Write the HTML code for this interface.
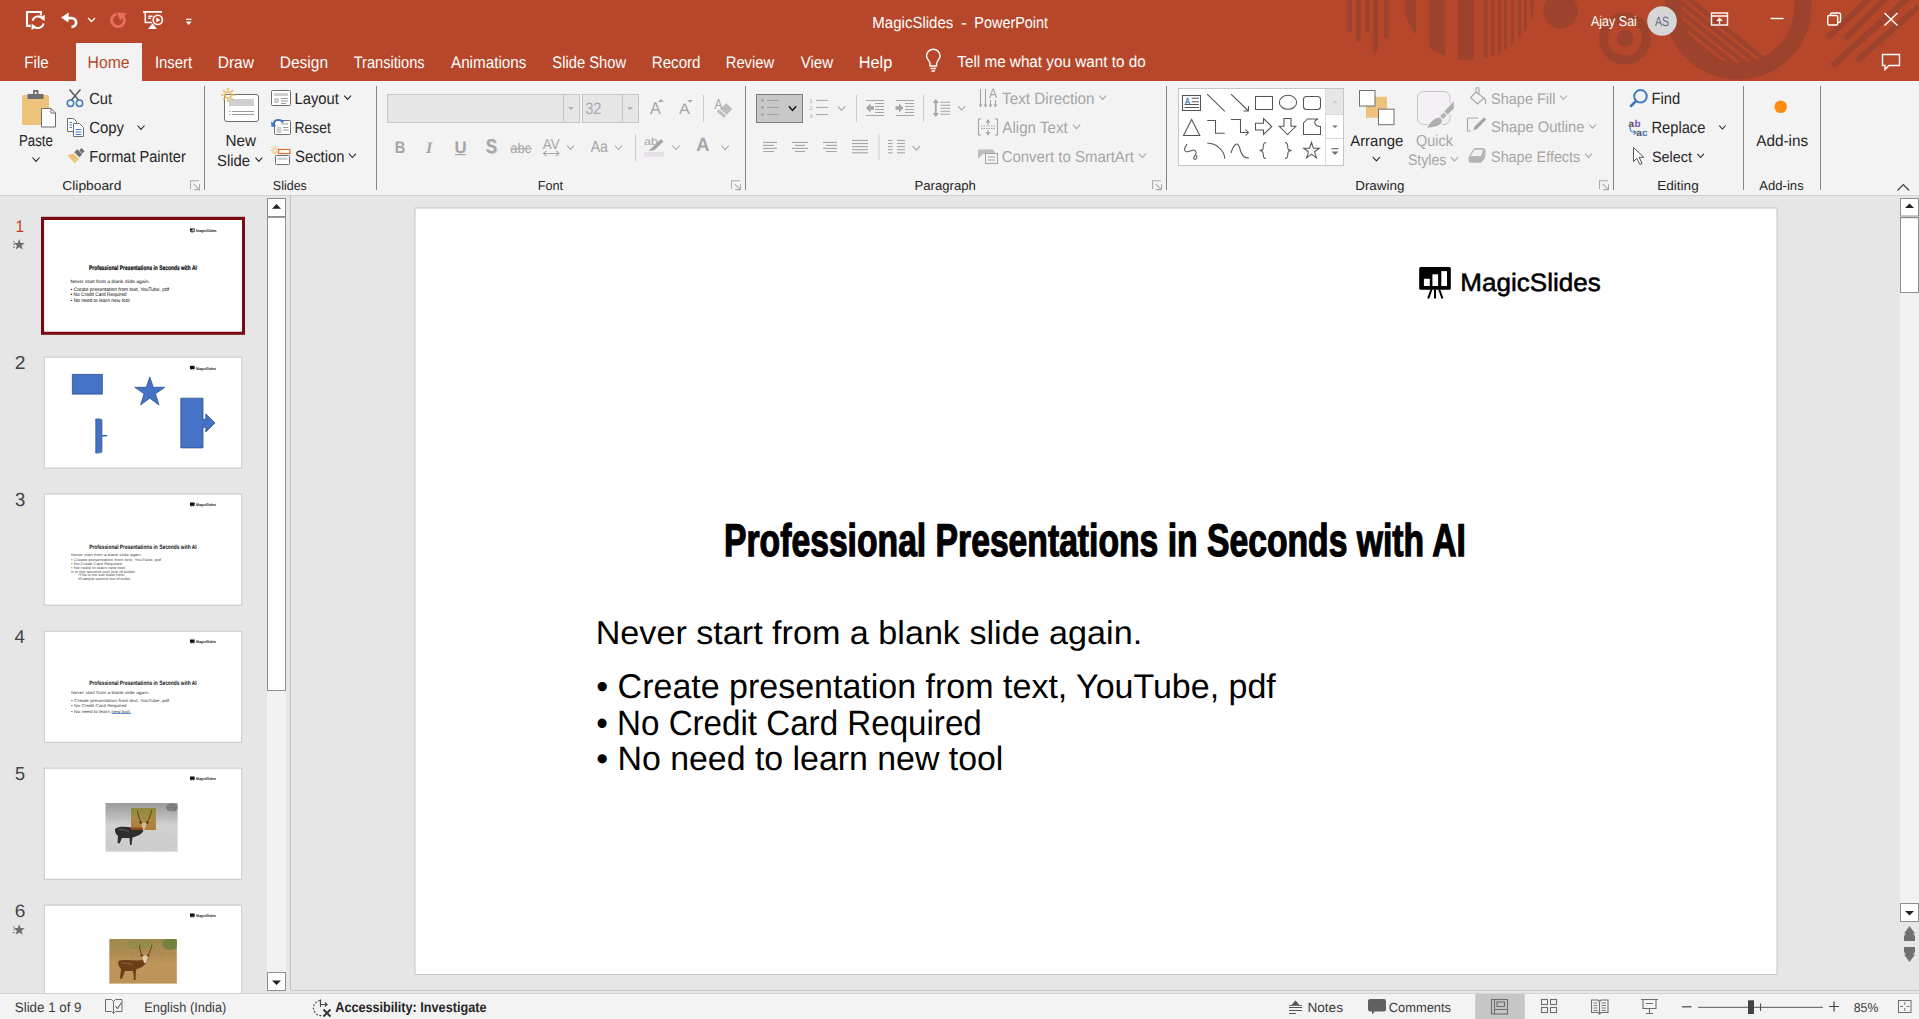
<!DOCTYPE html>
<html><head><meta charset="utf-8"><title>MagicSlides - PowerPoint</title>
<style>html,body{margin:0;padding:0;width:1919px;height:1019px;overflow:hidden;background:#E6E6E6}
svg{display:block;font-family:"Liberation Sans",sans-serif;text-rendering:geometricPrecision}</style></head><body>
<svg width="1919" height="1019" viewBox="0 0 1919 1019">
<rect x="0" y="0" width="1919" height="81" fill="#B7472A"/>
<g fill="#9D422C"><rect x="1347" y="0" width="5" height="32"/><rect x="1356" y="0" width="5" height="41"/><rect x="1365" y="0" width="5" height="32"/><rect x="1373" y="0" width="5" height="52"/><rect x="1384" y="0" width="5" height="38"/><clipPath id="cc"><circle cx="1469" cy="-8" r="68"/></clipPath><g clip-path="url(#cc)"><rect x="1405" y="0" width="11" height="81"/><rect x="1429" y="0" width="16" height="81"/><rect x="1458" y="0" width="16" height="81"/><rect x="1484" y="0" width="3.5" height="81"/><rect x="1491" y="0" width="3.5" height="81"/><rect x="1498" y="0" width="3" height="81"/><rect x="1504" y="0" width="3" height="81"/><rect x="1511" y="0" width="3" height="81"/><rect x="1518" y="0" width="3" height="81"/><rect x="1524" y="0" width="3" height="81"/><rect x="1530.5" y="0" width="3" height="81"/></g><circle cx="1560.5" cy="11" r="17.2"/><circle cx="1625" cy="38.5" r="21.5" fill="none" stroke-width="9" stroke="#9D422C"/><circle cx="1625" cy="38.5" r="8.5"/><circle cx="1738" cy="6" r="65" fill="none" stroke-width="17" stroke="#9D422C"/><clipPath id="cr"><circle cx="1738" cy="6" r="58"/></clipPath><g clip-path="url(#cr)"><line x1="1670" y1="-16" x2="1800" y2="88" stroke-width="4.6" stroke="#9D422C"/><line x1="1658" y1="-16" x2="1788" y2="88" stroke-width="4.6" stroke="#9D422C"/><line x1="1646" y1="-16" x2="1776" y2="88" stroke-width="4.6" stroke="#9D422C"/><line x1="1634" y1="-16" x2="1764" y2="88" stroke-width="4.6" stroke="#9D422C"/><line x1="1622" y1="-16" x2="1752" y2="88" stroke-width="4.6" stroke="#9D422C"/></g><line x1="1827" y1="38" x2="1872" y2="-4" stroke-width="6" stroke="#9D422C"/><line x1="1845" y1="39" x2="1890" y2="-6" stroke-width="6" stroke="#9D422C"/><line x1="1832" y1="66" x2="1919" y2="-12" stroke-width="6" stroke="#9D422C"/><line x1="1857" y1="61" x2="1919" y2="6" stroke-width="6" stroke="#9D422C"/></g>
<g fill="none" stroke="#FFFFFF" stroke-width="2.1">
<path d="M30.8 25.9 H27 V12 H40.9 V15.5"/>
<path d="M32.6 20.8 A5.8 5.8 0 0 1 43.3 19.6"/>
<path d="M43.6 23.6 A5.8 5.8 0 0 1 33 25.2"/>
</g>
<path d="M40.5 17.2 L44.8 14.8 L44.6 21.2z M35.8 27.6 L31.5 30 L31.7 23.6z" fill="#FFFFFF"/>
<path d="M67 18.2 H71.8 A4.3 4.3 0 0 1 71.8 26.8 H71.5" fill="none" stroke="#FFFFFF" stroke-width="2.7"/>
<path d="M61 17.6 L68.8 12.6 L68.3 22.6z" fill="#FFFFFF"/>
<path d="M88 18 l3.5 3.5 l3.5 -3.5" fill="none" stroke="#FFFFFF" stroke-width="1.3"/>
<path d="M116.34 14.12 A6.4 6.4 0 1 0 120.19 14.29" fill="none" stroke="#E96F5A" stroke-width="2.9"/>
<path d="M116.8 12.3 L126.8 13.3 L120.2 20.4z" fill="#E96F5A"/>
<g fill="none" stroke="#FFFFFF" stroke-width="1.6">
<path d="M143 11.9 H162 M145.3 12.8 V22.5 H152 M148.2 16.2 H152.6 M148.2 18.3 H151"/>
<circle cx="157.8" cy="19.9" r="4.6"/>
</g>
<path d="M148 29 H157 L152.6 23.2z" fill="#FFFFFF"/>
<path d="M156.3 17.3 L160.3 19.9 L156.3 22.5z" fill="#FFFFFF"/>
<path d="M186 19.3 H191.5" stroke="#FFFFFF" stroke-width="1.2"/>
<path d="M185.7 21.5 H191.7 L188.7 25z" fill="#FFFFFF"/>

<circle cx="1662" cy="21" r="14.8" fill="#D6D6D6"/>
<g fill="none" stroke="#FFFFFF" stroke-width="1.4">
<rect x="1711.5" y="13" width="16" height="12"/>
<path d="M1711.5 16 H1727.5 M1719.5 24 V18.5 M1717 21 L1719.5 18.5 L1722 21"/>
<path d="M1770.5 18.5 H1783.5"/>
<rect x="1827.7" y="15.5" width="10" height="9.5" rx="1.5"/>
<path d="M1830.5 15 V14.5 a1.5 1.5 0 0 1 1.5 -1.5 H1839 a1.5 1.5 0 0 1 1.5 1.5 V21 a1.5 1.5 0 0 1 -1.5 1.5 H1838"/>
<path d="M1884.5 13 L1897.5 25.5 M1897.5 13 L1884.5 25.5"/>
<path d="M1882.5 54.5 H1899.5 V65.5 H1889 L1885 69.5 V65.5 H1882.5z"/>
</g>
<rect x="76" y="43" width="66" height="38" fill="#F3F3F3"/>
<g fill="none" stroke="#FFFFFF" stroke-width="1.4">
<path d="M930 66 V63.5 C930 61 926.5 59.5 926.5 56 a6.8 6.8 0 0 1 13.6 0 C940.1 59.5 936.6 61 936.6 63.5 V66z"/>
<path d="M930.5 68.5 H936 M931.5 71 H935"/>
</g>
<rect x="0" y="81" width="1919" height="114" fill="#F3F3F3"/>
<rect x="0" y="195" width="1919" height="1" fill="#D2D2D2"/>
<rect x="204.0" y="86" width="1" height="104" fill="#858585"/>
<rect x="376.0" y="86" width="1" height="104" fill="#858585"/>
<rect x="745.0" y="86" width="1" height="104" fill="#858585"/>
<rect x="1166.0" y="86" width="1" height="104" fill="#858585"/>
<rect x="1613.0" y="86" width="1" height="104" fill="#858585"/>
<rect x="1743.0" y="86" width="1" height="104" fill="#858585"/>
<rect x="1820.0" y="86" width="1" height="104" fill="#858585"/>
<rect x="22" y="95" width="27" height="30" rx="1.5" fill="#EDC27C"/>
<path d="M27.5 94 H43.5 V99 H27.5z" fill="#6E6E6E"/><rect x="33" y="90" width="5.5" height="5" rx="1" fill="#6E6E6E"/>
<rect x="34.7" y="92" width="2" height="2" fill="#F3F3F3"/>
<path d="M41.5 108.5 H51 L55.5 113 V127 H41.5z" fill="#FFFFFF" stroke="#6E6E6E" stroke-width="1"/>
<path d="M51 108.5 V113 H55.5" fill="none" stroke="#6E6E6E" stroke-width="1"/>
<path d="M32.50 157.50 L36.00 161.35 L39.50 157.50" fill="none" stroke="#262626" stroke-width="1.1"/>
<g fill="none" stroke="#3F7BC0" stroke-width="1.5"><circle cx="70.5" cy="103.2" r="3.2"/><circle cx="79.5" cy="103.2" r="3.2"/></g>
<path d="M71.5 100 L80.5 89.5 M78.5 100 L69.5 89.5" stroke="#5E5E5E" stroke-width="1.6"/>
<path d="M67.5 118.5 H73.5 L76.5 121.5 V131.5 H67.5z" fill="#fff" stroke="#6E6E6E"/>
<path d="M73.5 123.5 H79.5 L83.5 127.5 V136.5 H73.5z" fill="#fff" stroke="#6E6E6E"/>
<g stroke="#3F7BC0" stroke-width="1"><path d="M69.5 122.5 H72 M69.5 125 H72 M69.5 127.5 H72"/><path d="M75.5 129.5 H81.5 M75.5 132 H81.5 M75.5 134.5 H81.5"/></g>
<path d="M137.50 125.50 L141.00 129.35 L144.50 125.50" fill="none" stroke="#262626" stroke-width="1.1"/>
<path d="M67.5 155.3 L73.5 153.5 L79 159 L74.6 163.3z" fill="#EDC27C"/>
<path d="M74.3 152.2 L77.2 149.3 L82.2 154.3 L79.3 157.2z" fill="#6E6E6E"/><path d="M79.2 150.4 L81.5 148.1 L84.6 151.2 L82.3 153.5z" fill="#6E6E6E"/>
<path d="M190.5 189 V180.7 H199 M193.6 183.8 L199.2 189.4 M199.5 184.3 V189.6 H194.2" fill="none" stroke="#ABABAB" stroke-width="1.05"/>
<rect x="224.5" y="94.5" width="34" height="27" rx="2.5" fill="#fff" stroke="#6E6E6E"/>
<rect x="229" y="99" width="25" height="7" fill="#CFCFCF"/>
<path d="M232 111.5 H254 M232 114.5 H254" stroke="#9A9A9A" stroke-width="1"/>
<path d="M229 111.5 H230.5 M229 114.5 H230.5" stroke="#9A9A9A"/>
<circle cx="228" cy="95" r="3.15" fill="none" stroke="#EDB85F" stroke-width="1.40"/><path d="M232.34 95.00 L235.00 95.00 M231.07 98.07 L232.95 99.95 M228.00 99.34 L228.00 102.00 M224.93 98.07 L223.05 99.95 M223.66 95.00 L221.00 95.00 M224.93 91.93 L223.05 90.05 M228.00 90.66 L228.00 88.00 M231.07 91.93 L232.95 90.05" stroke="#EDB85F" stroke-width="1.54"/>
<path d="M255.50 157.70 L258.85 161.38 L262.20 157.70" fill="none" stroke="#262626" stroke-width="1.1"/>
<rect x="271.5" y="90.5" width="19" height="15" rx="1" fill="#fff" stroke="#6E6E6E"/>
<rect x="274" y="93" width="14" height="3" fill="#CFCFCF"/><rect x="274" y="98" width="5" height="5" fill="#CFCFCF"/>
<path d="M281 98.5 H288 M281 101 H288 M281 103.5 H286" stroke="#9A9A9A" stroke-width="1"/>
<path d="M344.20 95.70 L347.60 99.44 L351.00 95.70" fill="none" stroke="#262626" stroke-width="1.1"/>
<rect x="274.5" y="120.5" width="16" height="14" rx="1" fill="#fff" stroke="#6E6E6E"/>
<rect x="276.5" y="127" width="5" height="6" fill="#CFCFCF"/><rect x="281" y="122.5" width="7" height="2.5" fill="#CFCFCF"/>
<path d="M283 127.5 H288.5 M283 130 H288.5" stroke="#9A9A9A"/>
<path d="M273.5 124 a5 4.5 0 0 1 9.5 -1.5" fill="none" stroke="#3F7BC0" stroke-width="2"/>
<path d="M271 121.5 L276.5 126 L271.5 127z" fill="#3F7BC0"/>
<rect x="278.5" y="149.5" width="11.5" height="4" fill="#fff" stroke="#E06B2A" stroke-width="1.2"/>
<rect x="275.5" y="155.5" width="14" height="9" rx="1" fill="#fff" stroke="#6E6E6E"/>
<rect x="277.5" y="157.5" width="10" height="2.5" fill="#CFCFCF"/>
<circle cx="275" cy="150.5" r="2.02" fill="none" stroke="#EDB85F" stroke-width="0.90"/><path d="M277.79 150.50 L279.50 150.50 M276.97 152.47 L278.18 153.68 M275.00 153.29 L275.00 155.00 M273.03 152.47 L271.82 153.68 M272.21 150.50 L270.50 150.50 M273.03 148.53 L271.82 147.32 M275.00 147.71 L275.00 146.00 M276.97 148.53 L278.18 147.32" stroke="#EDB85F" stroke-width="0.99"/>
<path d="M348.90 153.70 L352.40 157.55 L355.90 153.70" fill="none" stroke="#262626" stroke-width="1.1"/>
<rect x="387.5" y="94.5" width="192" height="28" fill="#E6E6E6" stroke="#C6C6C6"/>
<rect x="563" y="95" width="1" height="27" fill="#C6C6C6"/>
<rect x="582.5" y="94.5" width="56" height="28" fill="#E6E6E6" stroke="#C6C6C6"/>
<rect x="622" y="95" width="1" height="27" fill="#C6C6C6"/>
<path d="M567.8 107 H574 L570.9 110.3z M627 107 H633 L630 110.3z" fill="#B4B4B4"/>
<g fill="#A6A6A6"><path d="M658 102 L660.9 99 L663.8 102z M687.3 100 H692.9 L690.1 102.8z"/></g>
<rect x="703" y="95" width="1" height="27" fill="#CDCDCD"/>
<path d="M726.5 103.3 L732.3 109 L724 117.8 L716.6 111.5z" fill="#BDBDBD"/><path d="M718.8 108.6 L726.6 115.4" stroke="#F3F3F3" stroke-width="1.2"/>
<text x="426" y="152.6" font-family="Liberation Serif" font-style="italic" font-weight="700" font-size="16" fill="#A6A6A6">I</text>
<rect x="455" y="154" width="11" height="1.2" fill="#A6A6A6"/>
<rect x="510" y="148.3" width="22" height="1.1" fill="#A6A6A6"/>
<path d="M543.5 153.5 H559 M546.5 150.8 L543.5 153.5 L546.5 156.2 M556 150.8 L559 153.5 L556 156.2" fill="none" stroke="#A6A6A6" stroke-width="1.1"/>
<path d="M567.00 145.50 L570.50 149.35 L574.00 145.50" fill="none" stroke="#A6A6A6" stroke-width="1.1"/>
<path d="M614.80 145.50 L618.45 149.51 L622.10 145.50" fill="none" stroke="#A6A6A6" stroke-width="1.1"/>
<rect x="635" y="134" width="1" height="27" fill="#CDCDCD"/>
<path d="M648.5 151 L652 147.5 L661 139 L663.5 141.5 L654.5 150z" fill="#A6A6A6"/><rect x="644" y="152" width="20" height="4.8" fill="#E7E0E8"/>
<path d="M672.40 145.50 L676.05 149.51 L679.70 145.50" fill="none" stroke="#A6A6A6" stroke-width="1.1"/>
<path d="M721.30 145.50 L725.05 149.62 L728.80 145.50" fill="none" stroke="#A6A6A6" stroke-width="1.1"/>
<path d="M731.5 189 V180.7 H740 M734.6 183.8 L740.2 189.4 M740.5 184.3 V189.6 H735.2" fill="none" stroke="#ABABAB" stroke-width="1.05"/>
<rect x="756.5" y="94.5" width="46" height="28" fill="#C8C8C8" stroke="#7D7D7D"/>
<g fill="#A0A0A0"><circle cx="762.4" cy="100.4" r="1.4"/><circle cx="762.4" cy="107.4" r="1.4"/><circle cx="762.4" cy="114.6" r="1.4"/></g>
<path d="M767 100.4 H779 M767 107.4 H779 M767 114.6 H779" stroke="#A0A0A0" stroke-width="1"/>
<path d="M788.80 106.30 L792.50 110.37 L796.20 106.30" fill="none" stroke="#1E1E1E" stroke-width="1.6"/>
<path d="M816 100.4 H828 M816 107.4 H828 M816 114.6 H828" stroke="#A6A6A6" stroke-width="1"/>
<text x="809.5" y="103.3" font-size="5.5" fill="#A6A6A6">1</text>
<text x="809.5" y="110.3" font-size="5.5" fill="#A6A6A6">2</text>
<text x="809.5" y="117.5" font-size="5.5" fill="#A6A6A6">3</text>
<path d="M837.90 106.30 L841.50 110.26 L845.10 106.30" fill="none" stroke="#A6A6A6" stroke-width="1.1"/>
<rect x="856" y="95" width="1" height="27" fill="#CDCDCD"/>
<g stroke="#A6A6A6" stroke-width="1.1"><path d="M866 100.5 H884 M875 103.5 H884 M875 106.5 H884 M875 109.5 H884 M875 112.5 H884 M866 115.5 H884"/>
<path d="M896 100.5 H914 M905 103.5 H914 M905 106.5 H914 M905 109.5 H914 M905 112.5 H914 M896 115.5 H914"/></g>
<path d="M866 108 L870.5 103.5 V106.3 H874 V109.7 H870.5 V112.5z" fill="#A6A6A6"/>
<path d="M903.5 108 L899 103.5 V106.3 H895.5 V109.7 H899 V112.5z" fill="#A6A6A6"/>
<rect x="923" y="95" width="1" height="27" fill="#CDCDCD"/>
<path d="M940.5 102.3 H950 M940.5 105.3 H950 M940.5 108.3 H950 M940.5 111.3 H950 M940.5 114.3 H950" stroke="#A6A6A6" stroke-width="1.1"/>
<path d="M935.8 102 V114" stroke="#A6A6A6" stroke-width="1.8"/>
<path d="M932.5 103 L935.8 99 L939 103z M932.5 113 L935.8 117 L939 113z" fill="#A6A6A6"/>
<path d="M958.20 106.30 L961.60 110.04 L965.00 106.30" fill="none" stroke="#A6A6A6" stroke-width="1.1"/>
<g stroke="#A6A6A6" stroke-width="1.1"><path d="M763 142.4 H777"/><path d="M763 145.4 H774"/><path d="M763 148.4 H777"/><path d="M763 151.5 H774"/><path d="M792 142.4 H808"/><path d="M795 145.4 H805"/><path d="M792 148.4 H808"/><path d="M795 151.5 H805"/><path d="M823 142.4 H837"/><path d="M826 145.4 H837"/><path d="M823 148.4 H837"/><path d="M826 151.5 H837"/><path d="M852 140.4 H868"/><path d="M852 143.5 H868"/><path d="M852 146.6 H868"/><path d="M852 149.7 H868"/><path d="M852 152.8 H868"/><path d="M888 140.4 H892.5"/><path d="M888 143.5 H892.5"/><path d="M888 146.6 H892.5"/><path d="M888 149.7 H892.5"/><path d="M888 152.8 H892.5"/><path d="M897 140.4 H905"/><path d="M897 143.5 H905"/><path d="M897 146.6 H905"/><path d="M897 149.7 H905"/><path d="M897 152.8 H905"/></g>
<rect x="878.5" y="134.5" width="1" height="26" fill="#CDCDCD"/>
<path d="M912.80 146.20 L916.40 150.16 L920.00 146.20" fill="none" stroke="#A6A6A6" stroke-width="1.1"/>
<g stroke="#A6A6A6" stroke-width="1.1" fill="none"><path d="M980.5 89 V106 M985.5 89 V106 M990.5 100 V106 M995.5 100 V106"/></g>
<path d="M978.7 104.5 L980.5 107.8 L982.3 104.5z M983.7 104.5 L985.5 107.8 L987.3 104.5z M988.7 104.5 L990.5 107.8 L992.3 104.5z M993.7 104.5 L995.5 107.8 L997.3 104.5z" fill="#A6A6A6"/>
<path d="M1099.20 95.70 L1102.60 99.44 L1106.00 95.70" fill="none" stroke="#A6A6A6" stroke-width="1.1"/>
<g fill="none" stroke="#A6A6A6" stroke-width="1.1"><path d="M981 119 H978.5 V135 H981 M995 119 H997.5 V135 H995"/>
<path d="M981 126 H995 M981 128.5 H995" stroke-dasharray="1.5 1"/><path d="M988 120 V125 M988 130 V135"/></g>
<path d="M985.5 122.5 L988 119 L990.5 122.5z M985.5 132 L988 135.5 L990.5 132z" fill="#A6A6A6"/>
<path d="M1072.90 124.70 L1076.55 128.72 L1080.20 124.70" fill="none" stroke="#A6A6A6" stroke-width="1.1"/>
<path d="M978 149.5 H993 L996 154 H983 L978 159z" fill="#BDBDBD"/>
<rect x="985.5" y="153.5" width="12" height="10" fill="#F3EFF3" stroke="#A6A6A6"/>
<path d="M988 157 H995 M988 160 H995" stroke="#A6A6A6"/>
<path d="M1138.90 153.70 L1142.40 157.55 L1145.90 153.70" fill="none" stroke="#A6A6A6" stroke-width="1.1"/>
<path d="M1152.5 189 V180.7 H1161 M1155.6 183.8 L1161.2 189.4 M1161.5 184.3 V189.6 H1156.2" fill="none" stroke="#ABABAB" stroke-width="1.05"/>
<rect x="1178.5" y="88.5" width="165" height="77" fill="#fff" stroke="#C6C6C6"/>
<rect x="1325.5" y="89" width="17.5" height="25.5" fill="#E6E6E6"/><path d="M1325.5 89 V165 M1326 114.5 H1343 M1326 138.5 H1343" stroke="#DCDCDC" stroke-width="1"/>
<path d="M1332.2 102.8 L1335 100.3 L1337.8 102.8z" fill="#C8C8C8"/><path d="M1332.2 125.5 H1337.8 L1335 128z" fill="#707070"/><path d="M1331.5 148.7 H1338.5" stroke="#707070" stroke-width="1.2"/><path d="M1331.5 151.5 H1338.5 L1335 155z" fill="#707070"/>
<g fill="none" stroke="#555555" stroke-width="1.05">
<rect x="1182.5" y="95.5" width="18" height="15"/>
<path d="M1191.8 98.3 H1198.9 M1191.8 101.7 H1198.9 M1184.5 104.5 H1198.9 M1184.5 107.5 H1198.9"/>
<path d="M1207.2 94.2 L1224.8 111.4"/>
<path d="M1231 94.2 L1248.5 111 M1243.5 111 H1248.5 V106"/>
<rect x="1255.5" y="96.5" width="17" height="13"/>
<ellipse cx="1288" cy="102.3" rx="8.7" ry="7"/>
<rect x="1303.5" y="96.5" width="17" height="13" rx="3"/>
<path d="M1183.5 135.5 L1191.6 119.5 L1199.8 135.5z"/>
<path d="M1207.2 120.5 H1215.5 V133.3 H1224.8"/>
<path d="M1231 119.5 H1240.5 V132.5 H1248.5 M1245.5 129.5 L1248.5 132.5 L1245.5 135.5"/>
<path d="M1255.5 123.3 H1263.5 V118.5 L1271.8 126.5 L1263.5 134.5 V130 H1255.5z"/>
<path d="M1284 118.5 H1291 V126.3 H1295.8 L1287.5 134.5 L1279.2 126.3 H1284z"/>
<path d="M1303.5 123 L1307.5 119 H1318 C1313 121 1314 126 1320.5 126.5 V134.5 H1303.5z"/>
<path d="M1187 144 C1185 148 1183 150 1186 151.5 C1190 153 1194 147 1196 152 C1197.5 155 1192 157 1194 159 C1196 160 1198 157 1196 155.5"/>
<path d="M1207.2 143.1 C1216 143.5 1224.5 150 1224.8 158.7"/>
<path d="M1231 153 C1234 143 1238 141 1240 149 C1242 157 1245 158 1249 158"/>
<path d="M1266 142.5 C1262.5 142.5 1263.5 147 1263 149 C1262.5 150.5 1261 150.5 1259.5 150.5 C1261 150.5 1262.5 151 1263 152.5 C1263.5 155 1262.5 158.5 1266 158.5"/>
<path d="M1285 142.5 C1288.5 142.5 1287.5 147 1288 149 C1288.5 150.5 1290 150.5 1291.5 150.5 C1290 150.5 1288.5 151 1288 152.5 C1287.5 155 1288.5 158.5 1285 158.5"/>
<path d="M1311.5 142.3 L1313.4 148.2 L1319.3 148.2 L1314.5 151.8 L1316.4 157.8 L1311.5 154.2 L1306.6 157.8 L1308.5 151.8 L1303.7 148.2 L1309.6 148.2z"/>
</g>
<rect x="1366" y="96.8" width="21" height="21" fill="#EDC27C"/><rect x="1359.5" y="90.5" width="15.5" height="15.5" fill="#fff" stroke="#6E6E6E"/><rect x="1378.5" y="109.2" width="15.5" height="15.5" fill="#fff" stroke="#6E6E6E"/>
<path d="M1372.80 157.00 L1376.40 160.96 L1380.00 157.00" fill="none" stroke="#262626" stroke-width="1.1"/>
<rect x="1417.5" y="91.5" width="32.5" height="33" rx="6" fill="#F5F0F5" stroke="#C4C4C4"/><path d="M1453.8 101.2 V108.6 L1447.6 114.8 L1444.3 111.5z M1446.6 115.6 L1443.1 119.1 L1440.1 116.1 L1443.6 112.6z M1427 127.6 C1430 122.3 1434 118.4 1438.6 117.4 C1441.4 117.6 1442.6 120.2 1441.6 122.6 C1439.2 126.2 1433.2 127.6 1427 127.6z" fill="#F3F3F3" stroke="#F3F3F3" stroke-width="3" stroke-linejoin="round"/><path d="M1453.8 101.2 V108.6 L1447.6 114.8 L1444.3 111.5z M1446.6 115.6 L1443.1 119.1 L1440.1 116.1 L1443.6 112.6z M1427 127.6 C1430 122.3 1434 118.4 1438.6 117.4 C1441.4 117.6 1442.6 120.2 1441.6 122.6 C1439.2 126.2 1433.2 127.6 1427 127.6z" fill="#B0B0B0"/>
<path d="M1450.90 157.20 L1454.40 161.05 L1457.90 157.20" fill="none" stroke="#A6A6A6" stroke-width="1.1"/>
<g fill="none" stroke="#A6A6A6" stroke-width="1.1">
<path d="M1476 92 L1484 98 L1477.5 104 L1470.5 97.5z M1476 92 V89 a1.5 1.5 0 0 1 3 0 V94"/>
<path d="M1484 98 C1486 100 1486 102 1485.5 104"/>
<path d="M1467.5 118 H1478 M1467.5 118 V131 H1471"/>
</g>
<path d="M1473.5 130.5 L1474.5 126.5 L1484 117.3 L1486.3 119.6 L1477 129z" fill="#A6A6A6"/>
<path d="M1468.6 157 L1473.6 149 Q1474.3 148 1475.5 148 H1483 Q1485.4 148 1485.6 150.5 L1485.2 157.5 L1481.2 162.8 H1471 Q1468.4 162.6 1468.6 160z" fill="#B4B4B4"/>
<path d="M1469.8 156.6 L1474.3 149.3 H1483.6 L1481.2 156.6z" fill="#F4EFF4" stroke="#B4B4B4" stroke-width="0.8"/>
<path d="M1560.00 95.50 L1563.45 99.30 L1566.90 95.50" fill="none" stroke="#A6A6A6" stroke-width="1.1"/>
<path d="M1589.20 124.50 L1592.60 128.24 L1596.00 124.50" fill="none" stroke="#A6A6A6" stroke-width="1.1"/>
<path d="M1585.10 153.60 L1588.60 157.45 L1592.10 153.60" fill="none" stroke="#A6A6A6" stroke-width="1.1"/>
<path d="M1599.5 189 V180.7 H1608 M1602.6 183.8 L1608.2 189.4 M1608.5 184.3 V189.6 H1603.2" fill="none" stroke="#ABABAB" stroke-width="1.05"/>
<circle cx="1640.5" cy="96.3" r="6.3" fill="none" stroke="#3F7BC0" stroke-width="2"/>
<path d="M1631 106 L1636 101" stroke="#3F7BC0" stroke-width="2.6" stroke-linecap="round"/>
<text x="1628.6" y="126.9" font-size="10" font-weight="700" fill="#505050">a</text><text x="1634.4" y="126.9" font-size="10" font-weight="700" fill="#7E4FB0">b</text><text x="1636.3" y="135.8" font-size="10" font-weight="700" fill="#505050">a</text><text x="1642" y="135.8" font-size="10" font-weight="700" fill="#3F7BC0">c</text><path d="M1630 127 C1630 131 1631 132.5 1635.5 132.5 M1633.5 130.3 L1636 132.5 L1633.5 134.7" fill="none" stroke="#3F7BC0" stroke-width="1.1"/>
<path d="M1719.20 125.50 L1722.40 129.02 L1725.60 125.50" fill="none" stroke="#262626" stroke-width="1.1"/>
<path d="M1633.5 147.5 V161.5 L1636.8 158.3 L1639.8 164.5 L1642 163.5 L1639.2 157.3 H1643.8z" fill="#fff" stroke="#555" stroke-width="1"/>
<path d="M1697.30 153.90 L1700.60 157.53 L1703.90 153.90" fill="none" stroke="#262626" stroke-width="1.1"/>
<filter id="bl" x="-0.5" y="-0.5" width="2" height="2"><feGaussianBlur stdDeviation="0.7"/></filter><circle cx="1780.7" cy="106.8" r="6.3" fill="#FF8C0A" filter="url(#bl)"/>
<path d="M1897.5 190.5 L1903.3 184.5 L1909.1 190.5" fill="none" stroke="#444" stroke-width="1.2"/>
<rect x="0" y="196" width="1919" height="797" fill="#E6E6E6"/>
<defs><g id="slide1"><rect x="415.5" y="208.5" width="1361" height="765.5" fill="#fff"/><rect x="1419.2" y="267" width="31.6" height="22.7" rx="1.5" fill="#000"/><rect x="1423.9" y="278.8" width="5.9" height="7.2" fill="#fff"/><rect x="1432.4" y="274.3" width="5.7" height="11.7" fill="#fff"/><rect x="1441.3" y="271.1" width="5.7" height="14.9" fill="#fff"/><path d="M1431.4 289.5 L1428.2 298.5 M1435 289.5 V298.5 M1439.2 289.5 L1442.5 298.5" stroke="#000" stroke-width="2"/><text transform="translate(724.05 556.30) scale(0.7360 1)" font-size="45.78" font-weight="700" fill="#000" stroke="#000" stroke-width="1.3">Professional Presentations in Seconds with AI</text>
<text transform="translate(595.70 643.70) scale(1.0349 1)" font-size="32.99" font-weight="400" fill="#000">Never start from a blank slide again.</text>
<text transform="translate(596.26 697.80) scale(0.9911 1)" font-size="34.30" font-weight="400" fill="#000">• Create presentation from text, YouTube, pdf</text>
<text transform="translate(596.29 734.80) scale(0.9425 1)" font-size="35.17" font-weight="400" fill="#000">• No Credit Card Required</text>
<text x="596.26" y="770.30" font-size="33.87" font-weight="400" fill="#000">• No need to learn new tool</text>
<text transform="translate(1460.36 291.10) scale(1.0415 1)" font-size="25.00" font-weight="400" fill="#000" stroke="#000" stroke-width="0.55">MagicSlides</text></g></defs>
<rect x="414.5" y="207.5" width="1363" height="767.5" fill="#C6C6C6"/>
<use href="#slide1"/>
<rect x="290" y="196" width="1" height="794" fill="#BEBEBE"/>
<rect x="41" y="216.8" width="204" height="118" fill="#780A14"/>
<rect x="44.3" y="220" width="197.6" height="111.7" fill="#fff"/>
<rect x="43.8" y="356.6" width="198.4" height="112" fill="#C8C8C8"/>
<rect x="44.8" y="357.6" width="196.4" height="110" fill="#fff"/>
<rect x="43.8" y="493.6" width="198.4" height="112" fill="#C8C8C8"/>
<rect x="44.8" y="494.6" width="196.4" height="110" fill="#fff"/>
<rect x="43.8" y="630.8" width="198.4" height="112" fill="#C8C8C8"/>
<rect x="44.8" y="631.8" width="196.4" height="110" fill="#fff"/>
<rect x="43.8" y="767.7" width="198.4" height="112" fill="#C8C8C8"/>
<rect x="44.8" y="768.7" width="196.4" height="110" fill="#fff"/>
<rect x="43.8" y="904.7" width="198.4" height="112" fill="#C8C8C8"/>
<rect x="44.8" y="905.7" width="196.4" height="110" fill="#fff"/>
<g transform="translate(44.3 220) scale(0.14519) translate(-415.5 -208.5)"><use href="#slide1"/></g>
<path d="M19.2 239.0 L20.6 242.9 L24.8 243.0 L21.5 245.5 L22.7 249.5 L19.2 247.20000000000002 L15.7 249.5 L16.9 245.5 L13.6 243.0 L17.8 242.9z" fill="#6D6D6D"/><path d="M13 241.8 H15 M13 244.8 H14.5 M13 247.3 H15" stroke="#6D6D6D" stroke-width="0.8"/>
<path d="M19.2 924.2 L20.6 928.1 L24.8 928.2 L21.5 930.7 L22.7 934.7 L19.2 932.4 L15.7 934.7 L16.9 930.7 L13.6 928.2 L17.8 928.1z" fill="#6D6D6D"/><path d="M13 927.0 H15 M13 930.0 H14.5 M13 932.5 H15" stroke="#6D6D6D" stroke-width="0.8"/>
<g fill="#4472C4" stroke="#2F528F" stroke-width="0.8"><rect x="72.3" y="374.3" width="30" height="19.8"/><path d="M149.8 376.9 L153.3 387.3 L164.8 387.3 L155.5 393.8 L159 404.9 L149.8 398.2 L140.6 404.9 L144.1 393.8 L134.8 387.3 L146.3 387.3z"/><path d="M180.8 398.2 H203 V419.3 H205.8 V414 L215 423 L205.8 432 V427.3 H203 V447.9 H180.8z"/><path d="M95.8 419 H99.5 C101 419 101.9 419.5 101.9 420.5 V435.5 H106.8 V436 H101.9 V451.8 C101.9 452.5 100 453 95.8 453z"/></g>
<rect x="190" y="365.8" width="4.6" height="3.3" fill="#111"/><path d="M191.5 369.1 L191 370.40000000000003 M193.1 369.1 L193.6 370.40000000000003" stroke="#111" stroke-width="0.4"/><text x="196" y="369.5" font-size="3.9" font-weight="700" fill="#222" textLength="20" lengthAdjust="spacingAndGlyphs">MagicSlides</text>
<rect x="190" y="502.5" width="4.6" height="3.3" fill="#111"/><path d="M191.5 505.8 L191 507.1 M193.1 505.8 L193.6 507.1" stroke="#111" stroke-width="0.4"/><text x="196" y="506.2" font-size="3.9" font-weight="700" fill="#222" textLength="20" lengthAdjust="spacingAndGlyphs">MagicSlides</text>
<rect x="190" y="639.5" width="4.6" height="3.3" fill="#111"/><path d="M191.5 642.8 L191 644.1 M193.1 642.8 L193.6 644.1" stroke="#111" stroke-width="0.4"/><text x="196" y="643.2" font-size="3.9" font-weight="700" fill="#222" textLength="20" lengthAdjust="spacingAndGlyphs">MagicSlides</text>
<rect x="190" y="776.5" width="4.6" height="3.3" fill="#111"/><path d="M191.5 779.8 L191 781.1 M193.1 779.8 L193.6 781.1" stroke="#111" stroke-width="0.4"/><text x="196" y="780.2" font-size="3.9" font-weight="700" fill="#222" textLength="20" lengthAdjust="spacingAndGlyphs">MagicSlides</text>
<rect x="190" y="913.5" width="4.6" height="3.3" fill="#111"/><path d="M191.5 916.8 L191 918.1 M193.1 916.8 L193.6 918.1" stroke="#111" stroke-width="0.4"/><text x="196" y="917.2" font-size="3.9" font-weight="700" fill="#222" textLength="20" lengthAdjust="spacingAndGlyphs">MagicSlides</text>
<text x="89.2" y="548.6" font-size="6.3" font-weight="700" fill="#111" textLength="107.49999999999999" lengthAdjust="spacingAndGlyphs">Professional Presentations in Seconds with AI</text>
<text x="71" y="556.2" font-size="3.6" font-weight="400" fill="#4A4A4A" textLength="71" lengthAdjust="spacingAndGlyphs">Never start from a blank slide again.</text>
<text x="71" y="561.3" font-size="3.6" font-weight="400" fill="#4A4A4A" textLength="90" lengthAdjust="spacingAndGlyphs">• Create presentation from text, YouTube, pdf</text>
<text x="71" y="565.3" font-size="3.6" font-weight="400" fill="#4A4A4A" textLength="51" lengthAdjust="spacingAndGlyphs">• No Credit Card Required</text>
<text x="71" y="569.2" font-size="3.6" font-weight="400" fill="#4A4A4A" textLength="54" lengthAdjust="spacingAndGlyphs">• No need to learn new tool</text>
<text x="71" y="573.2" font-size="3.6" font-weight="400" fill="#4A4A4A" textLength="65" lengthAdjust="spacingAndGlyphs">It is the second one line of bullet.</text>
<text x="78" y="576.2" font-size="3.6" font-weight="400" fill="#4A4A4A" textLength="47" lengthAdjust="spacingAndGlyphs">•This is the sub bullet here.</text>
<text x="78" y="580.2" font-size="3.6" font-weight="400" fill="#4A4A4A" textLength="53" lengthAdjust="spacingAndGlyphs">•Example second line of bullet.</text>
<text x="89.2" y="685.4" font-size="6.3" font-weight="700" fill="#111" textLength="107.49999999999999" lengthAdjust="spacingAndGlyphs">Professional Presentations in Seconds with AI</text>
<text x="71" y="693.6" font-size="4.2" font-weight="400" fill="#3A3A3A" textLength="78.5" lengthAdjust="spacingAndGlyphs">Never start from a blank slide again.</text>
<text x="71" y="701.6" font-size="4.2" font-weight="400" fill="#3A3A3A" textLength="98" lengthAdjust="spacingAndGlyphs">• Create presentation from text, YouTube, pdf</text>
<text x="71" y="706.6" font-size="4.2" font-weight="400" fill="#3A3A3A" textLength="55.5" lengthAdjust="spacingAndGlyphs">• No Credit Card Required</text>
<text x="71" y="712.6" font-size="4.2" font-weight="400" fill="#3A3A3A" textLength="60" lengthAdjust="spacingAndGlyphs">• No need to learn new tool.</text>
<rect x="111.5" y="713.2" width="19.5" height="0.7" fill="#1F5FC0"/>
<defs><linearGradient id="g5" x1="0" y1="0" x2="0" y2="1"><stop offset="0" stop-color="#8A8A8A"/><stop offset="0.35" stop-color="#C9C9C9"/><stop offset="1" stop-color="#BDBDBD"/></linearGradient><linearGradient id="g6" x1="0" y1="0" x2="0" y2="1"><stop offset="0" stop-color="#6E7A34"/><stop offset="0.3" stop-color="#9C7A3C"/><stop offset="1" stop-color="#B08A4C"/></linearGradient></defs>
<defs><filter id="nz" x="0" y="0" width="1" height="1"><feTurbulence type="fractalNoise" baseFrequency="0.55" numOctaves="2" seed="3"/><feColorMatrix type="matrix" values="0 0 0 0 0.5  0 0 0 0 0.5  0 0 0 0 0.5  1.2 0 0 0 -0.35"/><feComposite in2="SourceGraphic" operator="in"/></filter><linearGradient id="g5b" x1="0" y1="0" x2="0" y2="1"><stop offset="0" stop-color="#959595"/><stop offset="0.3" stop-color="#BDBDBD"/><stop offset="0.45" stop-color="#D6D6D6"/><stop offset="1" stop-color="#CFCFCF"/></linearGradient><linearGradient id="g5c" x1="0" y1="0" x2="0" y2="1"><stop offset="0" stop-color="#8C8A3A"/><stop offset="0.5" stop-color="#A88A45"/><stop offset="1" stop-color="#B07C3A"/></linearGradient><linearGradient id="g6b" x1="0" y1="0" x2="0" y2="1"><stop offset="0" stop-color="#9C8440"/><stop offset="0.35" stop-color="#B0884A"/><stop offset="0.55" stop-color="#C09252"/><stop offset="1" stop-color="#BC8E50"/></linearGradient></defs>
<clipPath id="c5"><rect x="105.3" y="803" width="72.5" height="48.8"/></clipPath><clipPath id="c6"><rect x="109.2" y="939" width="67.7" height="44.8"/></clipPath>
<g clip-path="url(#c5)">
<rect x="105.3" y="803" width="72.5" height="48.8" fill="url(#g5b)"/><ellipse cx="172" cy="807.5" rx="6" ry="4" fill="#5E5E5E" opacity="0.7"/><rect x="105.3" y="803" width="72.5" height="48.8" fill="#fff" filter="url(#nz)" opacity="0.6"/><path d="M115 829 C118 826 126 826.5 132 827.5 L140 828 L143.5 831 C141 835 137 836 132.5 837.5 L131.5 845 L130 845 L129.5 838 L122 838 L119.5 843.5 L117.5 843 L118 836 C116 834 114.5 832 115 829z" fill="#2E2E2E"/><path d="M118.5 830 C122 829 126 830 129 832" stroke="#6A6A6A" stroke-width="0.8" fill="none"/><rect x="131" y="808" width="24.9" height="22" fill="url(#g5c)"/><rect x="131" y="827.5" width="12" height="2.5" fill="#8A4A20"/><path d="M143 829.5 L141.5 825 L143 822.5 L145.5 822.5 L146.5 825 L144.5 829.5z" fill="#D8B890"/><path d="M141.5 823 C139 819 138 815 137.5 810.5 M146.5 823 C149 819 151 815 151.5 810" stroke="#5A3A1A" stroke-width="0.9" fill="none"/><circle cx="140.5" cy="822.5" r="1.2" fill="#5A3A1A"/><circle cx="147.5" cy="822.5" r="1.2" fill="#5A3A1A"/>
</g>
<g clip-path="url(#c6)">
<rect x="109.2" y="939" width="67.7" height="44.8" fill="url(#g6b)"/><ellipse cx="170" cy="944" rx="8" ry="6" fill="#5E7A30" opacity="0.75"/><ellipse cx="140" cy="945" rx="14" ry="4" fill="#7E8A40" opacity="0.5"/><rect x="109.2" y="939" width="67.7" height="44.8" fill="#fff" filter="url(#nz)" opacity="0.35"/><path d="M118.5 961 C121 959.5 130 960 136 960.5 L143 960 L146 963 C143.5 967 139.5 968 136 969.5 L135.5 980 L134 980 L133 971 L125 971 L122 979 L120 978.5 L121 969 C119 967 117.5 964 118.5 961z" fill="#6E3E18"/><path d="M122 963.5 C126 962.5 130 963.5 133 965" stroke="#9A6A3A" stroke-width="0.9" fill="none"/><path d="M144 963 L142.5 957.5 L144 955.5 L146.5 955.5 L147.5 957.5 L145.5 963z" fill="#E0D0B0"/><path d="M142.5 956 C140 952 139.5 948 139.5 945 M147.5 956 C150 952 151 948 152 945" stroke="#5A3A1A" stroke-width="0.9" fill="none"/><circle cx="141.5" cy="955.5" r="1.1" fill="#5A3A1A"/><circle cx="148.5" cy="955.5" r="1.1" fill="#5A3A1A"/>
</g>
<rect x="267" y="198" width="19" height="793" fill="#F2F2F2"/>
<rect x="267.5" y="198.5" width="18" height="18" fill="#fff" stroke="#909090"/><path d="M272 208.7 H281 L276.5 204z" fill="#222"/><rect x="267.5" y="217" width="18" height="473.5" fill="#fff" stroke="#909090"/><rect x="267.5" y="216.5" width="18" height="1.2" fill="#8A8A8A"/><rect x="267.5" y="972.5" width="18" height="18" fill="#fff" stroke="#909090"/><path d="M272 980.5 H281 L276.5 985z" fill="#222"/>
<rect x="1900" y="198" width="19" height="705" fill="#F2F2F2"/><rect x="1900.5" y="198.5" width="18" height="17.5" fill="#fff" stroke="#909090"/><path d="M1905 208 H1914 L1909.5 203.5z" fill="#222"/><rect x="1900.5" y="217.5" width="18" height="75" fill="#fff" stroke="#909090"/><rect x="1900.5" y="217" width="18" height="1.2" fill="#8A8A8A"/><rect x="1900.5" y="903.5" width="18" height="18" fill="#fff" stroke="#909090"/><path d="M1905 911 H1914 L1909.5 915.5z" fill="#222"/><path d="M1909.5 926 L1915 933.5 H1913 L1915 936 V941 H1904 V936 L1906 933.5 H1904z" fill="#707070"/><path d="M1909.5 962 L1915 954.5 H1913 L1915 952 V947 H1904 V952 L1906 954.5 H1904z" fill="#707070"/>
<rect x="291" y="990" width="1628" height="1" fill="#C8C8C8"/>
<rect x="0" y="993" width="1919" height="26" fill="#F3F3F3"/><rect x="0" y="993" width="1919" height="1" fill="#D4D4D4"/>
<path d="M105.5 999.5 H111.5 L113.5 1001.5 V1013.5 L111.5 1011.5 H105.5z M113.5 1001.5 L115.5 999.5 H122 V1011.5 H115.5 L113.5 1013.5" fill="none" stroke="#6E6E6E" stroke-width="1"/><path d="M115.5 1006 L117.5 1008.5 L121.5 1002.5" fill="none" stroke="#6E6E6E" stroke-width="1.2"/>
<path d="M320 1000.5 A7.5 7.5 0 1 0 322 1015.5" fill="none" stroke="#555" stroke-width="1.2" stroke-dasharray="2 1.5"/><path d="M320.5 999.5 V1007 M320.5 1004.5 H327 M325 1002.5 L327 1004.5 L325 1006.5" fill="none" stroke="#444" stroke-width="1.2"/><path d="M323.5 1009.5 L330.5 1016.5 M330.5 1009.5 L323.5 1016.5" stroke="#333" stroke-width="1.8"/>
<path d="M1289 1007.5 H1302 M1289 1010.5 H1302 M1289 1013.5 H1296" stroke="#555" stroke-width="1.1"/><path d="M1291.5 1005 L1295.5 1000.5 L1299.5 1005z" fill="#555"/><path d="M1289 1005.5 H1302" stroke="#555" stroke-width="0.8"/>
<path d="M1370 999 H1384 a2 2 0 0 1 2 2 V1009.5 a2 2 0 0 1 -2 2 H1375 L1372 1014.5 V1011.5 H1370 a2 2 0 0 1 -2 -2 V1001 a2 2 0 0 1 2 -2z" fill="#616161"/>
<rect x="1475.2" y="994" width="49.6" height="25" fill="#C6C6C6"/>
<g fill="none" stroke="#6E6E6E" stroke-width="1.1"><rect x="1491.5" y="999.5" width="16" height="14.5"/><path d="M1494.5 999.5 V1014 M1494.5 1009.5 H1507.5"/><rect x="1497" y="1002" width="7.5" height="4.5"/><rect x="1541.5" y="999.5" width="6" height="5"/><rect x="1550.5" y="999.5" width="6" height="5"/><rect x="1541.5" y="1007.5" width="6" height="5"/><rect x="1550.5" y="1007.5" width="6" height="5"/><path d="M1591.5 1000 H1598 L1599.5 1001.5 L1601 1000 H1608 V1012.5 H1601 L1599.5 1014 L1598 1012.5 H1591.5z M1599.5 1001.5 V1013"/><path d="M1593.5 1003 H1597.5 M1593.5 1005.5 H1597.5 M1593.5 1008 H1597.5 M1593.5 1010.5 H1597.5 M1601.5 1003 H1606 M1601.5 1005.5 H1606 M1601.5 1008 H1606 M1601.5 1010.5 H1606" stroke-width="0.9"/><path d="M1641 999.5 H1658 M1643 999.5 V1008.5 H1656 V999.5 M1646 1003.5 H1653 M1649.5 1008.5 V1013.5 M1646 1013.5 H1653"/></g>
<path d="M1682 1006.8 H1691.5" stroke="#444" stroke-width="1.2"/><path d="M1698 1007.3 H1823" stroke="#555" stroke-width="1"/><rect x="1748" y="1000.3" width="6" height="13.7" fill="#444"/><path d="M1760.6 1003.5 V1011" stroke="#444" stroke-width="1"/><path d="M1829 1006.5 H1839 M1834 1001.5 V1011.5" stroke="#444" stroke-width="1.2"/>
<rect x="1898.5" y="1000.5" width="12.5" height="12" fill="none" stroke="#6E6E6E" stroke-width="1"/><path d="M1904.75 1002 V1005 M1904.75 1008 V1011 M1900 1006.5 H1903 M1906.5 1006.5 H1909.5" stroke="#6E6E6E" stroke-width="0.9"/>
<text transform="translate(872.37 28.00) scale(0.9348 1)" font-size="16.06" font-weight="400" fill="#FFFFFF">MagicSlides</text>
<text transform="translate(960.86 28.00) scale(1.2156 1)" font-size="15.50" font-weight="400" fill="#FFFFFF">-</text>
<text transform="translate(974.32 28.00) scale(0.8992 1)" font-size="16.06" font-weight="400" fill="#FFFFFF">PowerPoint</text>
<text transform="translate(1590.98 26.00) scale(0.8746 1)" font-size="14.32" font-weight="400" fill="#FFFFFF">Ajay Sai</text>
<text transform="translate(1654.98 25.80) scale(0.7845 1)" font-size="13.59" font-weight="400" fill="#5B6B7C">AS</text>
<text transform="translate(24.37 67.90) scale(0.8959 1)" font-size="16.79" font-weight="400" fill="#FFFFFF">File</text>
<text transform="translate(87.51 67.90) scale(0.9390 1)" font-size="16.79" font-weight="400" fill="#B7472A">Home</text>
<text transform="translate(154.88 67.90) scale(0.8855 1)" font-size="16.79" font-weight="400" fill="#FFFFFF">Insert</text>
<text transform="translate(217.72 67.90) scale(0.9263 1)" font-size="16.79" font-weight="400" fill="#FFFFFF">Draw</text>
<text transform="translate(279.73 67.90) scale(0.9252 1)" font-size="16.79" font-weight="400" fill="#FFFFFF">Design</text>
<text transform="translate(353.67 67.90) scale(0.8708 1)" font-size="16.79" font-weight="400" fill="#FFFFFF">Transitions</text>
<text transform="translate(450.97 67.90) scale(0.9083 1)" font-size="16.79" font-weight="400" fill="#FFFFFF">Animations</text>
<text transform="translate(552.33 67.90) scale(0.8779 1)" font-size="16.79" font-weight="400" fill="#FFFFFF">Slide Show</text>
<text transform="translate(651.76 67.90) scale(0.9014 1)" font-size="16.79" font-weight="400" fill="#FFFFFF">Record</text>
<text transform="translate(725.79 67.90) scale(0.8763 1)" font-size="16.79" font-weight="400" fill="#FFFFFF">Review</text>
<text transform="translate(800.68 67.90) scale(0.8958 1)" font-size="16.79" font-weight="400" fill="#FFFFFF">View</text>
<text transform="translate(858.66 67.90) scale(0.9723 1)" font-size="16.79" font-weight="400" fill="#FFFFFF">Help</text>
<text transform="translate(957.26 66.70) scale(0.9514 1)" font-size="16.06" font-weight="400" fill="#FFFFFF">Tell me what you want to do</text>
<text transform="translate(18.96 146.00) scale(0.8269 1)" font-size="16.06" font-weight="400" fill="#262626">Paste</text>
<text transform="translate(89.25 104.00) scale(0.9152 1)" font-size="16.06" font-weight="400" fill="#262626">Cut</text>
<text transform="translate(89.24 133.00) scale(0.9286 1)" font-size="16.06" font-weight="400" fill="#262626">Copy</text>
<text transform="translate(89.30 161.90) scale(0.9088 1)" font-size="16.06" font-weight="400" fill="#262626">Format Painter</text>
<text transform="translate(62.30 189.90) scale(1.0620 1)" font-size="13.00" font-weight="400" fill="#262626">Clipboard</text>
<text transform="translate(225.45 145.90) scale(0.9590 1)" font-size="15.92" font-weight="400" fill="#262626">New</text>
<text transform="translate(217.03 166.00) scale(0.9311 1)" font-size="15.92" font-weight="400" fill="#262626">Slide</text>
<text transform="translate(294.49 104.20) scale(0.9220 1)" font-size="16.06" font-weight="400" fill="#262626">Layout</text>
<text transform="translate(294.56 133.00) scale(0.8747 1)" font-size="15.92" font-weight="400" fill="#262626">Reset</text>
<text transform="translate(295.03 161.80) scale(0.9069 1)" font-size="16.35" font-weight="400" fill="#262626">Section</text>
<text transform="translate(272.83 189.90) scale(0.9608 1)" font-size="13.00" font-weight="400" fill="#262626">Slides</text>
<text transform="translate(585.14 114.30) scale(0.8913 1)" font-size="16.55" font-weight="400" fill="#A9A9B4">32</text>
<text transform="translate(649.97 114.30) scale(0.9372 1)" font-size="17.22" font-weight="400" fill="#A6A6A6">A</text>
<text transform="translate(678.97 114.30) scale(1.0735 1)" font-size="15.19" font-weight="400" fill="#A6A6A6">A</text>
<text transform="translate(714.38 108.60) scale(0.8060 1)" font-size="14.61" font-weight="400" fill="#A6A6A6">A</text>
<text transform="translate(394.72 152.60) scale(0.8706 1)" font-size="16.79" font-weight="700" fill="#A6A6A6">B</text>
<text x="454.49" y="152.60" font-size="16.79" font-weight="700" fill="#A6A6A6">U</text>
<text transform="translate(487.02 154.30) scale(0.8124 1)" font-size="20.57" font-weight="700" fill="#DADADA">S</text>
<text transform="translate(485.81 153.10) scale(0.8443 1)" font-size="19.99" font-weight="700" fill="#A6A6A6">S</text>
<text transform="translate(510.35 152.60) scale(0.9109 1)" font-size="14.32" font-weight="400" fill="#A6A6A6">abc</text>
<text transform="translate(542.77 148.70) scale(0.9376 1)" font-size="14.32" font-weight="400" fill="#A6A6A6">AV</text>
<text transform="translate(590.77 151.70) scale(0.8650 1)" font-size="16.21" font-weight="400" fill="#A6A6A6">Aa</text>
<text transform="translate(643.97 144.80) scale(1.1860 1)" font-size="10.50" font-weight="400" fill="#A6A6A6">ab</text>
<text transform="translate(696.24 150.90) scale(0.9524 1)" font-size="19.26" font-weight="700" fill="#A6A6A6">A</text>
<text transform="translate(537.66 189.80) scale(0.9738 1)" font-size="13.00" font-weight="400" fill="#262626">Font</text>
<text transform="translate(914.42 190.10) scale(1.0119 1)" font-size="13.00" font-weight="400" fill="#262626">Paragraph</text>
<text transform="translate(988.98 97.60) scale(0.8695 1)" font-size="13.88" font-weight="400" fill="#A6A6A6">A</text>
<text transform="translate(1002.06 103.90) scale(0.9437 1)" font-size="16.21" font-weight="400" fill="#A6A6A6">Text Direction</text>
<text transform="translate(1002.37 133.00) scale(0.9353 1)" font-size="16.21" font-weight="400" fill="#A6A6A6">Align Text</text>
<text transform="translate(1001.64 161.80) scale(0.9502 1)" font-size="15.77" font-weight="400" fill="#A6A6A6">Convert to SmartArt</text>
<text transform="translate(1184.81 103.50) scale(0.8085 1)" font-size="9.23" font-weight="700" fill="#3F7BC0">A</text>
<text transform="translate(1350.17 145.90) scale(0.9755 1)" font-size="15.33" font-weight="400" fill="#262626">Arrange</text>
<text transform="translate(1415.91 145.90) scale(0.9116 1)" font-size="15.92" font-weight="400" fill="#A6A6A6">Quick</text>
<text transform="translate(1407.96 165.30) scale(0.9187 1)" font-size="15.33" font-weight="400" fill="#A6A6A6">Styles</text>
<text transform="translate(1491.04 103.60) scale(0.9452 1)" font-size="15.33" font-weight="400" fill="#A6A6A6">Shape Fill</text>
<text transform="translate(1491.03 132.40) scale(0.9519 1)" font-size="15.48" font-weight="400" fill="#A6A6A6">Shape Outline</text>
<text transform="translate(1491.05 161.50) scale(0.9371 1)" font-size="15.33" font-weight="400" fill="#A6A6A6">Shape Effects</text>
<text transform="translate(1355.20 190.10) scale(1.0310 1)" font-size="13.00" font-weight="400" fill="#262626">Drawing</text>
<text transform="translate(1651.49 103.90) scale(0.9102 1)" font-size="16.21" font-weight="400" fill="#262626">Find</text>
<text transform="translate(1651.50 132.90) scale(0.8982 1)" font-size="16.35" font-weight="400" fill="#262626">Replace</text>
<text transform="translate(1652.05 161.50) scale(0.9541 1)" font-size="15.04" font-weight="400" fill="#262626">Select</text>
<text transform="translate(1657.19 190.20) scale(1.0437 1)" font-size="13.00" font-weight="400" fill="#262626">Editing</text>
<text transform="translate(1756.17 145.90) scale(0.9744 1)" font-size="15.77" font-weight="400" fill="#262626">Add-ins</text>
<text transform="translate(1759.37 189.80) scale(1.0050 1)" font-size="13.00" font-weight="400" fill="#262626">Add-ins</text>
<text transform="translate(15.51 231.50) scale(0.9246 1)" font-size="16.83" font-weight="400" fill="#C43E1C">1</text>
<text transform="translate(14.63 369.10) scale(1.0296 1)" font-size="18.78" font-weight="400" fill="#444">2</text>
<text transform="translate(14.89 506.10) scale(0.9746 1)" font-size="19.06" font-weight="400" fill="#444">3</text>
<text x="14.57" y="643.20" font-size="18.65" font-weight="400" fill="#444">4</text>
<text transform="translate(15.07 780.10) scale(0.9596 1)" font-size="18.92" font-weight="400" fill="#444">5</text>
<text transform="translate(14.63 916.50) scale(1.0550 1)" font-size="18.09" font-weight="400" fill="#444">6</text>
<text transform="translate(14.79 1011.60) scale(0.9708 1)" font-size="13.74" font-weight="400" fill="#3B3B3B">Slide 1 of 9</text>
<text transform="translate(144.25 1011.60) scale(0.9345 1)" font-size="13.74" font-weight="400" fill="#3B3B3B">English (India)</text>
<text transform="translate(335.28 1011.90) scale(0.8935 1)" font-size="14.17" font-weight="700" fill="#262626">Accessibility: Investigate</text>
<text transform="translate(1307.38 1011.90) scale(1.0235 1)" font-size="13.30" font-weight="400" fill="#3B3B3B">Notes</text>
<text transform="translate(1388.75 1011.90) scale(0.9675 1)" font-size="13.30" font-weight="400" fill="#3B3B3B">Comments</text>
<text transform="translate(1853.76 1012.00) scale(0.9553 1)" font-size="12.92" font-weight="400" fill="#3B3B3B">85%</text>

</svg></body></html>
